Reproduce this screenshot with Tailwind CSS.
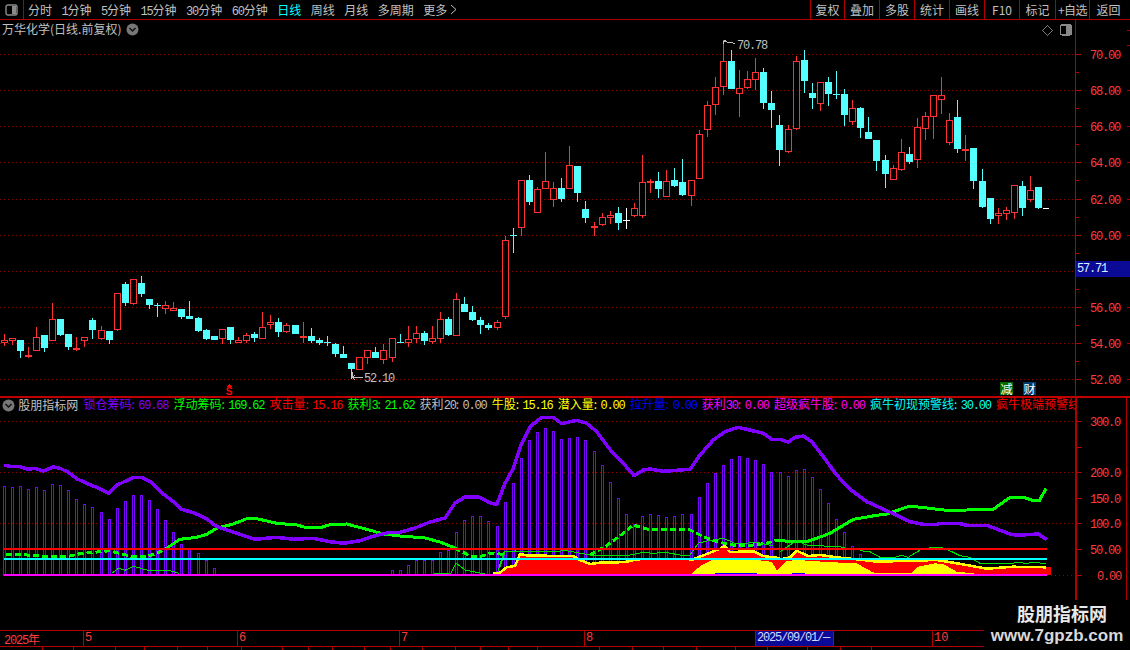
<!DOCTYPE html>
<html lang="zh">
<head>
<meta charset="utf-8">
<script src="https://cdn.jsdelivr.net/npm/@tailwindcss/browser@4"></script>
</head>
<body class="bg-black">
<div class="relative w-[1130px] h-[650px] overflow-hidden bg-black text-[12px] text-[#c0c0c0] font-['Noto_Sans_CJK_SC',sans-serif] flex flex-col">

  <!-- top toolbar -->
  <header class="h-[20px] shrink-0 flex items-stretch border-b border-[#b00000] leading-[19px] whitespace-nowrap">
    <div class="w-[24px] shrink-0 border-r border-[#b00000] flex items-center justify-center">
      <svg width="13" height="12" viewBox="0 0 13 12"><rect x="1" y="1" width="11" height="10" rx="2" fill="none" stroke="#8a8a8a" stroke-width="1.4"/><rect x="7" y="2" width="4" height="8" fill="#8a8a8a"/></svg>
    </div>
    <nav class="flex gap-[9.5px] pl-[4px]">
      <span>分时</span>
      <span><span class="font-['Liberation_Mono'] tracking-[-1.2px]">1</span>分钟</span>
      <span><span class="font-['Liberation_Mono'] tracking-[-1.2px]">5</span>分钟</span>
      <span><span class="font-['Liberation_Mono'] tracking-[-1.2px]">15</span>分钟</span>
      <span><span class="font-['Liberation_Mono'] tracking-[-1.2px]">30</span>分钟</span>
      <span><span class="font-['Liberation_Mono'] tracking-[-1.2px]">60</span>分钟</span>
      <span class="text-[#00ffff]">日线</span>
      <span>周线</span>
      <span>月线</span>
      <span>多周期</span>
      <span class="flex items-center gap-[3px]">更多<svg width="7" height="11" viewBox="0 0 7 11"><path d="M1 1l5 4.500-5 4.500" fill="none" stroke="#c0c0c0"/></svg></span>
    </nav>
    <div class="ml-auto flex text-center">
      <span class="w-[34px] border-l border-[#b00000]">复权</span>
      <span class="w-[35px] border-l border-[#b00000]">叠加</span>
      <span class="w-[35px] border-l border-[#b00000]">多股</span>
      <span class="w-[35px] border-l border-[#b00000]">统计</span>
      <span class="w-[35px] border-l border-[#b00000]">画线</span>
      <span class="w-[35px] border-l border-[#b00000]">F10</span>
      <span class="w-[36px] border-l border-[#b00000]">标记</span>
      <span class="w-[34px] border-l border-[#b00000] tracking-[-0.5px]">+自选</span>
      <span class="w-[41px] border-l border-[#b00000] pr-[3px]">返回</span>
    </div>
  </header>

  <!-- price pane -->
  <section class="relative h-[376px] shrink-0">
    <svg id="price" class="block" width="1130" height="376" viewBox="0 20 1130 376"></svg>
    <div class="absolute left-[2px] top-0 flex items-center gap-[5px] leading-[18px] whitespace-nowrap">
      <span>万华化学(日线.前复权)</span>
      <svg width="13" height="13" viewBox="0 0 13 13"><circle cx="6.500" cy="6.500" r="6" fill="#777"/><path d="M3.500 5l3 3 3-3" fill="none" stroke="#111" stroke-width="1.500"/></svg>
    </div>
    <div class="absolute left-[1076px] top-[241px] w-[54px] h-[16px] bg-[#0a0a96] text-[#d8f0ff] leading-[16px] pl-[1px] font-['Liberation_Mono'] tracking-[-1.2px]">57.71</div>
    <div class="absolute left-[1000px] top-[362px] w-[13px] h-[13px] bg-[#006a00] text-white leading-[13px] text-center">减</div>
    <div class="absolute left-[1023px] top-[362px] w-[13px] h-[13px] bg-[#003a6a] text-white leading-[13px] text-center">财</div>
  </section>

  <!-- indicator pane -->
  <section class="relative h-[234px] shrink-0">
    <svg id="indicator" class="block" width="1130" height="234" viewBox="0 396 1130 234"></svg>
    <div class="absolute left-[2px] top-0 w-[1073px] h-[18px] overflow-hidden flex items-center gap-[5.2px] leading-[18px] whitespace-nowrap">
      <svg class="shrink-0" width="13" height="13" viewBox="0 0 13 13"><circle cx="6.500" cy="6.500" r="6" fill="#777"/><path d="M3.500 5l3 3 3-3" fill="none" stroke="#111" stroke-width="1.500"/></svg>
      <span class="-ml-[2px] shrink-0">股朋指标网</span>
      <span class="shrink-0 text-[#8000ff]">锁仓筹码:<span class="ml-[3.5px] font-['Liberation_Mono'] tracking-[-1.2px]">69.68</span></span>
      <span class="shrink-0 text-[#00ff00]">浮动筹码:<span class="ml-[3.5px] font-['Liberation_Mono'] tracking-[-1.2px]">169.62</span></span>
      <span class="shrink-0 text-[#ff0000]">攻击量:<span class="ml-[3.5px] font-['Liberation_Mono'] tracking-[-1.2px]">15.16</span></span>
      <span class="shrink-0 text-[#00ff00]">获利<span class="font-['Liberation_Mono'] tracking-[-1.2px]">3</span>:<span class="ml-[3.5px] font-['Liberation_Mono'] tracking-[-1.2px]">21.62</span></span>
      <span class="shrink-0 text-[#c0c0c0]">获利<span class="font-['Liberation_Mono'] tracking-[-1.2px]">20</span>:<span class="ml-[3.5px] font-['Liberation_Mono'] tracking-[-1.2px]">0.00</span></span>
      <span class="shrink-0 text-[#ffff00]">牛股:<span class="ml-[3.5px] font-['Liberation_Mono'] tracking-[-1.2px]">15.16</span></span>
      <span class="shrink-0 text-[#ffff00]">潜入量:<span class="ml-[3.5px] font-['Liberation_Mono'] tracking-[-1.2px]">0.00</span></span>
      <span class="shrink-0 text-[#0000ff]">拉升量:<span class="ml-[3.5px] font-['Liberation_Mono'] tracking-[-1.2px]">0.00</span></span>
      <span class="shrink-0 text-[#ff00ff]">获利<span class="font-['Liberation_Mono'] tracking-[-1.2px]">30</span>:<span class="ml-[3.5px] font-['Liberation_Mono'] tracking-[-1.2px]">0.00</span></span>
      <span class="shrink-0 text-[#ff00ff]">超级疯牛股:<span class="ml-[3.5px] font-['Liberation_Mono'] tracking-[-1.2px]">0.00</span></span>
      <span class="shrink-0 text-[#00ffff]">疯牛初现预警线:<span class="ml-[3.5px] font-['Liberation_Mono'] tracking-[-1.2px]">30.00</span></span>
      <span class="shrink-0 text-[#ff0000]">疯牛极端预警线:<span class="ml-[3.5px] font-['Liberation_Mono'] tracking-[-1.2px]">50.00</span></span>
    </div>
  </section>

  <!-- time axis -->
  <div class="h-[17px] shrink-0 w-[984px] flex border-y border-[#b00000] text-[#ff3c3c] leading-[15px] whitespace-nowrap">
    <span class="w-[83px] pl-[4px]"><span class="font-['Liberation_Mono'] tracking-[-1.2px]">2025</span>年</span>
    <span class="w-[154px] border-l border-[#b00000] pl-[1px] font-['Liberation_Mono']">5</span>
    <span class="w-[162px] border-l border-[#b00000] pl-[1px] font-['Liberation_Mono']">6</span>
    <span class="w-[185px] border-l border-[#b00000] pl-[1px] font-['Liberation_Mono']">7</span>
    <span class="w-[171px] border-l border-[#b00000] pl-[1px] font-['Liberation_Mono']">8</span>
    <span class="w-[78px] border-l border-[#b00000] bg-[#0a0a96] text-[#d8d8ff] pl-[1px] font-['Liberation_Mono'] tracking-[-1.2px]">2025/09/01/—</span>
    <span class="w-[99px] border-l border-[#b00000]"></span>
    <span class="w-[52px] border-l border-[#b00000] pl-[1px] font-['Liberation_Mono']">10</span>
  </div>
  <svg id="bottomticks" class="block shrink-0" width="984" height="3"></svg>

  <!-- watermark -->
  <div class="absolute left-[984px] top-[600px] w-[146px] h-[50px] bg-black flex flex-col items-center text-[#e8e8e8] font-bold">
    <span class="text-[18px] leading-[26px] translate-x-[5px]">股朋指标网</span>
    <span class="text-[17px] leading-[20px] font-['Liberation_Sans'] text-[#d8d8d8]">www.7gpzb.com</span>
  </div>
</div>

<script>
(function(){
const RED='#ff3232',CY='#54ffff',AX='#b00000',GRID='#900000';
const z=(x0,y0,a)=>a.map(p=>[x0+p[0]/3,y0+p[1]/3]);
const pts=a=>a.map(p=>p[0].toFixed(1)+','+p[1].toFixed(1)).join(' ');
const rect=(x,y,w,h,f)=>`<rect x="${x}" y="${y}" width="${w}" height="${h}" fill="${f}"/>`;
const mono=(x,y,t,f)=>`<text x="${x}" y="${y}" fill="${f}" font-family="Liberation Mono" font-size="12" letter-spacing="-1.2">${t}</text>`;
const gridLine=(y,x1,x2)=>`<line x1="${x1}" x2="${x2}" y1="${y+.5}" y2="${y+.5}" stroke="${GRID}" stroke-dasharray="1 3"/>`;

/* candles: centre, high, low, bodyTop, bodyBottom, type — 3x zoom coordinates */
const A=[[13,222,258,240,248,'r'],[37,234,255,234,242,'r'],[61,240,294,240,273,'c'],[85,261,294,285,291,'r'],[109,201,273,231,272,'r'],[133,225,276,225,264,'c'],[157,129,243,177,243,'r'],[181,177,228,177,225,'c'],[205,222,270,222,261,'c'],[229,231,272,264,270,'r'],[253,231,261,231,243,'r'],[277,174,237,180,210,'c'],[304,198,240,210,237,'r'],[328,213,252,213,240,'c'],[352,99,213,99,210,'r'],[376,66,138,72,129,'c'],[400,57,135,57,132,'r'],[424,48,111,69,102,'c'],[448,117,147,117,135,'c'],[472,129,171,135,137,'c'],[496,123,162,136,147,'r'],[520,126,153,145,152,'r'],[544,147,177,147,171,'c'],[568,123,177,168,177,'c'],[595,171,216,174,213,'c'],[619,207,240,210,237,'c'],[643,228,240,228,240,'c'],[667,207,252,207,237,'r'],[691,201,252,201,240,'c'],[715,231,250,241,248,'r'],[739,219,249,225,242,'r'],[763,216,246,222,234,'c'],[787,156,237,201,237,'r'],[811,165,207,186,195,'r'],[835,174,231,186,216,'c'],[859,189,219,195,216,'r'],[886,195,222,195,222,'c'],[910,186,249,228,234,'r'],[934,204,249,228,243,'c'],[958,234,255,240,249,'c'],[982,228,258,246,250,'c'],[1006,249,291,252,282,'c'],[1030,258,294,282,294,'c'],[1054,309,357,309,327,'c'],[1078,291,330,291,330,'r'],[1102,270,312,270,293,'r'],[1126,261,294,276,294,'c']];
const B=[[10,642,702,660,690,'r'],[37,625,695,625,685,'r'],[61,612,640,636,638,'c'],[85,588,651,628,640,'r'],[109,588,639,610,628,'r'],[133,604,645,610,633,'c'],[157,588,642,625,635,'r'],[181,546,639,568,626,'r'],[205,561,618,567,615,'c'],[229,489,618,508,617,'r'],[253,501,546,522,546,'c'],[277,528,573,546,570,'c'],[301,561,612,570,585,'c'],[325,579,600,585,594,'c'],[352,570,600,577,594,'r'],[376,318,567,331,560,'r'],[400,294,369,315,317,'c'],[424,150,318,151,293,'r'],[448,135,225,150,216,'c'],[472,171,249,178,248,'r'],[496,66,177,154,176,'r'],[520,156,231,175,209,'r'],[544,144,216,174,207,'c'],[568,48,177,106,176,'r'],[592,108,216,108,189,'c'],[616,213,279,237,264,'c'],[643,276,318,288,293,'r'],[667,249,288,262,284,'r'],[691,243,282,255,263,'r'],[715,231,300,249,279,'c'],[739,234,297,270,272,'w'],[763,219,261,235,258,'r'],[787,75,264,157,258,'r'],[811,147,189,153,158,'r'],[835,126,204,153,177,'c'],[859,120,201,154,200,'r'],[883,114,171,150,168,'c'],[907,87,198,156,195,'c'],[934,150,228,151,197,'r'],[958,0,147,13,146,'r']];
const C=[[52,198,306,211,284,'r'],[76,126,240,157,209,'r'],[100,15,180,79,157,'r'],[124,45,162,78,162,'c'],[148,105,246,160,176,'r'],[172,108,162,133,160,'r'],[196,69,165,112,134,'r'],[220,99,222,111,204,'c'],[244,168,279,204,225,'c'],[268,240,393,270,345,'c'],[295,270,354,283,350,'r'],[319,63,285,79,281,'r'],[343,45,174,75,138,'c'],[367,144,222,174,189,'c'],[391,141,228,142,206,'r'],[415,126,213,141,177,'c'],[439,108,192,177,179,'c'],[463,162,273,177,240,'c'],[487,195,270,220,260,'r'],[511,216,309,219,279,'c'],[535,246,312,291,312,'c'],[559,315,408,315,378,'c'],[586,360,459,375,417,'c'],[610,390,435,400,434,'r'],[634,312,408,352,404,'r'],[658,336,387,357,381,'c'],[682,249,399,277,374,'r'],[706,231,315,244,281,'r'],[730,180,312,181,245,'r'],[754,126,237,181,194,'r'],[778,234,330,256,323,'r'],[802,195,354,246,342,'c'],[826,300,378,342,347,'r'],[850,339,462,339,438,'c'],[877,402,519,438,516,'c'],[901,489,567,489,552,'c'],[925,519,567,535,542,'r'],[949,516,555,526,536,'r'],[973,450,552,451,533,'r'],[997,438,543,453,519,'c'],[1021,423,501,466,494,'r'],[1045,456,522,456,519,'c']];
function candle(x0,y0,d){
  const X=Math.floor(x0+d[0]/3),hi=Math.round(y0+d[1]/3),lo=Math.round(y0+d[2]/3),t=Math.round(y0+d[3]/3),b=Math.round(y0+d[4]/3),k=d[5];
  if(k==='w') return rect(X,hi,1,lo-hi,'#fff')+rect(X-3,t,7,1,'#fff');
  const col=k==='r'?RED:CY;
  let s=rect(X,hi,1,lo-hi,col);
  if(k==='c') s+=rect(X-3,t,7,Math.max(1,b-t),col);
  else if(b-t<3) s+=rect(X-3,t,7,Math.max(2,b-t),col);
  else s+=`<rect x="${X-2.5}" y="${t+.5}" width="6" height="${b-t-1}" fill="#000" stroke="${col}"/>`;
  return s;
}
let p='';
[54,90,126,162,199,235,271,307,343,379].forEach(y=>p+=gridLine(y,0,1075));
A.forEach(d=>p+=candle(0,260,d));B.forEach(d=>p+=candle(380,130,d));C.forEach(d=>p+=candle(690,35,d));
p+=rect(1043,208,6,1,'#fff');
/* high and low markers */
p+=`<path d="M723.500 40.500h2M723.500 40.500v3M724 41l4 1.500 3-.5 4 2M352.500 372v6M352 377.500h11M352 377.500l3-2M352 377.500l3 2" fill="none" stroke="#c0c0c0"/>`;
p+=mono(737,49,'70.78','#c0c0c0')+mono(364,382,'52.10','#c0c0c0');
/* buy marker */
p+=`<path d="M229 384l3 3h-6z" fill="#ff0000"/><text x="229" y="395" text-anchor="middle" fill="#ff0000" font-family="Liberation Sans" font-weight="700" font-size="10">S</text>`;
/* axis */
p+=rect(1075,20,1,376,AX);
[[54,'70.00'],[90,'68.00'],[126,'66.00'],[162,'64.00'],[199,'62.00'],[235,'60.00'],[307,'56.00'],[343,'54.00'],[379,'52.00']].forEach(a=>{p+=rect(1076,a[0],5,1,AX)+mono(1090,a[0]+4.5,a[1],'#ff3c3c');});
[72,108,144,180,217,253,289,325,361].forEach(y=>p+=rect(1076,y,3,1,AX));
[30,45,90,126,162,199,235,307,343,379].forEach(y=>p+=rect(1127,y,3,1,AX));
/* diamond and layout icon */
p+=`<path d="M1047.500 25.500l5 5-5 5-5-5z" fill="none" stroke="#777"/><rect x="1060.500" y="25" width="11" height="10" rx="2" fill="none" stroke="#8a8a8a" stroke-width="1.300"/><rect x="1066" y="26" width="5" height="8" fill="#8a8a8a"/>`;
document.getElementById('price').innerHTML=`<g shape-rendering="crispEdges">${p}</g>`;

/* indicator */
const barsA=[[13,228],[37,232],[61,228],[85,238],[109,232],[133,240],[157,223],[181,226],[205,240],[229,268],[253,283],[277,292],[304,307],[328,328],[352,295],[376,274],[400,256],[424,256],[448,271],[472,298],[496,331],[520,367],[544,403],[568,418],[595,430],[619,450],[643,475]];
const barsAbs=[[392,570],[400,570],[408,565],[416,560],[424,560],[432,560],[440,552],[448,550],[456,532],[464,520],[472,516]];
const barsB=[[0,318],[24,333],[51,348],[75,277],[99,220],[123,144],[147,90],[171,66],[195,55],[219,64],[243,87],[267,84],[291,82],[315,90],[343,123],[367,165],[391,216],[415,264],[439,312],[463,342],[487,318],[511,312],[535,316],[559,322],[583,318],[607,312],[634,312],[658,262],[682,220],[706,190],[730,165],[754,148],[778,138],[802,145],[826,150],[850,163],[874,186]];
const barsC=[[0,186],[25,198],[49,181],[73,177],[97,201],[121,237],[145,280],[169,327],[193,366],[217,408],[241,432]];
const bars=[...z(0,410,barsA),...barsAbs,...z(480,410,barsB),...z(780,410,barsC)];
const purple=[...z(0,410,[[12,166],[30,169],[60,170],[85,178],[105,175],[130,183],[160,171],[180,175],[205,187],[230,206],[260,220],[290,232],[325,250],[350,226],[400,202],[425,202],[450,214],[490,252],[520,275],[545,298],[570,305],[600,316],[620,326],[650,350],[680,360],[720,373],[765,388],[830,382],[880,388],[940,385],[990,395],[1030,400],[1080,392],[1130,376],[1170,367],[1200,367]]),
 [415,528],[430,522],[445,518],[455,503],[465,497],[475,497],
 ...z(480,410,[[0,262],[25,276],[50,284],[75,220],[100,175],[125,100],[150,50],[185,22],[220,22],[245,41],[290,31],[320,40],[350,65],[395,125],[430,160],[462,197],[490,180],[510,177],[550,184],[630,178],[660,135],[700,90],[735,65],[775,52],[850,70],[875,88]]),
 ...z(780,410,[[0,88],[25,96],[45,82],[70,78],[95,95],[130,140],[170,195],[210,238],[260,275],[320,302],[390,335],[430,343],[470,343],[480,340],[535,340],[560,346],[620,346],[690,372],[710,376],[775,372],[800,389]])];
const g1=z(0,410,[[18,432],[80,435],[120,438],[160,441],[200,440],[240,431],[300,425],[330,422],[365,432],[400,440],[440,440],[470,430],[500,415]]);
const g2=[...z(0,410,[[500,415],[510,408],[540,388],[590,382],[620,373],[650,355],[700,342],[740,326],[770,326],[830,340],[890,345],[920,353],[960,353],[990,344],[1040,342],[1100,358],[1150,372],[1200,378]]),[425,538],[440,542],[455,548]];
const g3=[[455,548],[470,556],[480,557]];
const g4a=z(480,410,[[0,440],[30,430],[60,432],[75,435]]);
const g4b=z(480,410,[[330,435],[380,407],[430,370],[460,345],[500,357],[630,360],[670,380],[710,395],[760,405],[820,405],[860,400],[885,392],[900,392]]);
const g5=z(780,410,[[0,392],[50,395],[80,395],[110,385],[150,370],[175,355],[220,328],[290,316],[320,312],[390,288],[440,294],[510,302],[560,300],[640,298],[690,262],[730,262],[760,272],[778,272],[798,236]]);
const thin=[z(0,410,[[335,490],[355,475],[375,481],[400,469],[445,481],[510,482],[538,490]]),
 [[434,573],[447,573],[450,575],[456,563],[465,570],[485,574]],
 [[497,574],[504,552],[517,551]],
 z(480,410,[[60,470],[75,425],[105,423],[210,425],[260,422],[330,435],[450,435],[490,427],[520,430],[555,427],[600,435],[630,435],[655,400],[680,393],[730,385],[770,402],[830,397],[880,408]]),
 z(780,410,[[0,425],[30,405],[50,392],[80,405],[110,407],[180,410],[220,420]]),
 z(780,410,[[240,422],[270,425],[300,442],[345,442],[365,436],[385,442],[420,420],[455,412],[490,412]]),
 z(780,410,[[505,420],[540,437],[570,442],[600,460],[690,460],[715,458],[740,460],[765,457],[798,462]])];
const areaTop=[...z(480,410,[[40,490],[60,488],[80,472],[105,468],[120,432],[140,436],[170,436],[220,438],[280,438],[300,450],[330,462],[360,458],[400,458],[440,455],[470,448],[540,447],[640,448],[680,432],[720,416],[735,408],[750,426],[820,424],[850,438],[895,444]]),
 ...z(780,410,[[0,448],[30,442],[50,422],[85,438],[120,435],[180,443],[230,448],[290,455],[400,452],[470,450],[520,458],[560,465],[620,476],[700,470],[798,472]])];
const yellow=[...z(480,410,[[635,490],[665,465],[695,450],[830,450],[870,455],[895,455]]),...z(780,410,[[0,452],[30,452],[50,450],[130,455],[185,458],[230,460],[275,485],[285,488],[395,488],[415,470],[465,460],[490,462],[530,485],[580,490]])];

let q='';
q+=rect(0,396,1130,2,'#c00000');
[421,472,523].forEach(y=>q+=gridLine(y,0,1075));
bars.forEach(b=>{const X=Math.floor(b[0]),Y=Math.round(b[1]);q+=`<rect x="${X-.5}" y="${Y+.5}" width="2" height="${575-Y}" fill="none" stroke="#7a00ff"/>`;});
q+=`<polyline points="${pts(g1)}" fill="none" stroke="#00ff00" stroke-width="3" stroke-dasharray="6 3"/>`;
q+=`<polyline points="${pts(g4a)}" fill="none" stroke="#00ff00" stroke-width="3" stroke-dasharray="6 3"/>`;
q+=`<polyline points="${pts(g4b)}" fill="none" stroke="#00ff00" stroke-width="3" stroke-dasharray="6 3"/>`;
q+=`<polyline points="${pts(g2)}" fill="none" stroke="#00ff00" stroke-width="3"/>`;
q+=`<polyline points="${pts(g3)}" fill="none" stroke="#00ff00" stroke-width="3" stroke-dasharray="6 3"/>`;
q+=`<polyline points="${pts(g5)}" fill="none" stroke="#00ff00" stroke-width="3"/>`;
q+=`<polyline points="${pts(purple)}" fill="none" stroke="#8000ff" stroke-width="3.500" stroke-linejoin="round"/>`;
thin.forEach(t=>q+=`<polyline points="${pts(t)}" fill="none" stroke="#00e000" stroke-width="1"/>`);
/* red and yellow area */
q+=`<polygon points="${pts([...areaTop,[1051,567],[1051,575],[493,575]])}" fill="#ff0000"/>`;
q+=`<polygon points="${pts([...yellow,[980,575],[692,575]])}" fill="#ffff00"/>`;
q+=`<polygon points="771,560 777,571 786,561" fill="#ff0000"/>`;
q+=`<polyline points="${pts(areaTop)}" fill="none" stroke="#ffff00" stroke-width="2.500"/>`;
q+=rect(715,573,42,1,'#0000ff')+rect(792,573,13,1,'#0000ff');
/* threshold lines */
q+=rect(4,548,1043,2,'#ff0000')+rect(4,558,1043,2,'#00ffff')+rect(4,574,1043,2,'#ff00ff');
q+=gridLine(575,1051,1075);
/* axis */
q+=rect(1075,396,2,204,AX)+rect(1126,396,1,204,AX);
[[421,'300.0'],[472,'200.0'],[498,'150.0'],[523,'100.0'],[549,'50.00']].forEach(a=>{q+=rect(1077,a[0],5,1,AX)+mono(1090,a[0]+5,a[1],'#ff3c3c');});
q+=rect(1077,575,5,1,AX)+mono(1097,580,'0.00','#ff3c3c')+rect(1077,447,5,1,AX);
document.getElementById('indicator').innerHTML=`<g shape-rendering="crispEdges">${q}</g>`;

/* ticks of the time axis */
let tk='';
[42,73,115,144,177,207,241,282,308,332,364,390,422,455,480,508,537,599,632,663,696,735,767,807,840,871].forEach(x=>tk+=rect(x,0,1,3,AX));
document.getElementById('bottomticks').innerHTML=tk;
})();
</script>
</body>
</html>
